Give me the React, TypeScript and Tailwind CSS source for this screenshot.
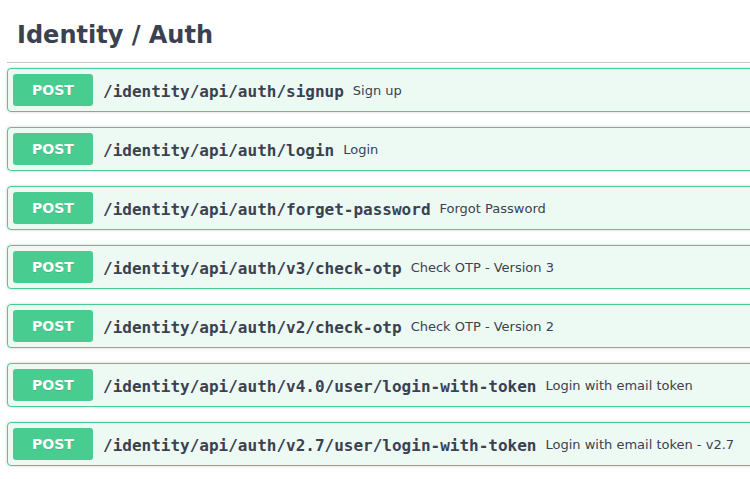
const endpoints = [
  { path: '/identity/api/auth/signup', summary: 'Sign up' },
  { path: '/identity/api/auth/login', summary: 'Login' },
  { path: '/identity/api/auth/forget-password', summary: 'Forgot Password' },
  { path: '/identity/api/auth/v3/check-otp', summary: 'Check OTP - Version 3' },
  { path: '/identity/api/auth/v2/check-otp', summary: 'Check OTP - Version 2' },
  { path: '/identity/api/auth/v4.0/user/login-with-token', summary: 'Login with email token' },
  { path: '/identity/api/auth/v2.7/user/login-with-token', summary: 'Login with email token - v2.7' },
]

function Operation({ path, summary }: { path: string; summary: string }) {
  return (
    <div className="mb-[15px] rounded-[4px] border border-[#49cc90] bg-[#edfaf4] shadow-[0_0_3px_rgba(0,0,0,0.19)]">
      <div className="flex items-center p-[5px]">
        <span className="flex h-[32px] w-[80px] shrink-0 items-center justify-center rounded-[3px] bg-[#49cc90] font-['DejaVu_Sans',sans-serif] text-[14px] font-bold text-white [text-shadow:0_1px_0_rgba(0,0,0,0.1)]">
          POST
        </span>
        <span className="whitespace-nowrap pl-[10px] pr-[9px] pt-[4px] font-['DejaVu_Sans_Mono',monospace] text-[16px] font-semibold text-[#3b4151]">
          {path}
        </span>
        <span className="whitespace-nowrap pt-[2px] font-['DejaVu_Sans',sans-serif] text-[13px] text-[#3b4151]">
          {summary}
        </span>
      </div>
    </div>
  )
}

export default function App() {
  return (
    <div className="h-[479px] w-[750px] overflow-hidden bg-white">
      <div className="w-[820px] pl-[7px]">
        {/* tag header */}
        <h3 className="mb-[5px] border-b border-[#c4c6cb] pb-[13px] pl-[10px] pt-[21px] font-['DejaVu_Sans',sans-serif] text-[24px] font-bold leading-[28px] text-[#3b4151]">
          Identity / Auth
        </h3>
        {endpoints.map((e) => (
          <Operation key={e.path} path={e.path} summary={e.summary} />
        ))}
      </div>
    </div>
  )
}
